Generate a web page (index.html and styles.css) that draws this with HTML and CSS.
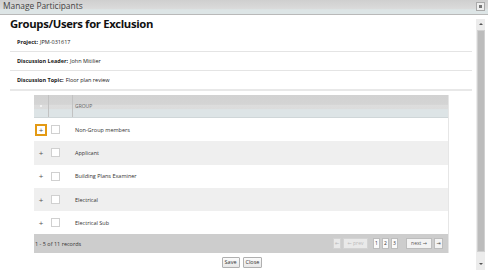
FILE: index.html
```html
<!DOCTYPE html>
<html>
<head>
<meta charset="utf-8">
<link rel="stylesheet" href="styles.css">
</head>
<body>
<div class="window">
  <div class="titlebar">
    <span class="title">Manage Participants</span>
    <span class="close"></span>
  </div>
  <div class="body">
    <div class="main">
      <h1 class="heading">Groups/Users for Exclusion</h1>
      <div class="info">
        <div class="info-row"><b>Project:</b> JPM-031617</div>
        <div class="info-row"><b>Discussion Leader:</b> John Mitilier</div>
        <div class="info-row info-last"><b>Discussion Topic:</b> Floor plan review</div>
      </div>
      <div class="grid">
        <div class="grid-head">
          <div class="hcell c1"><span class="dot"></span></div>
          <div class="hcell c2"></div>
          <div class="hcell c3">GROUP</div>
        </div>
        <div class="row">
          <div class="cell c1"><span class="plus focus">+</span></div>
          <div class="cell c2"><span class="check"></span></div>
          <div class="cell c3">Non-Group members</div>
        </div>
        <div class="row alt">
          <div class="cell c1"><span class="plus">+</span></div>
          <div class="cell c2"><span class="check"></span></div>
          <div class="cell c3">Applicant</div>
        </div>
        <div class="row">
          <div class="cell c1"><span class="plus">+</span></div>
          <div class="cell c2"><span class="check"></span></div>
          <div class="cell c3">Building Plans Examiner</div>
        </div>
        <div class="row alt">
          <div class="cell c1"><span class="plus">+</span></div>
          <div class="cell c2"><span class="check"></span></div>
          <div class="cell c3">Electrical</div>
        </div>
        <div class="row">
          <div class="cell c1"><span class="plus">+</span></div>
          <div class="cell c2"><span class="check"></span></div>
          <div class="cell c3">Electrical Sub</div>
        </div>
        <div class="pager">
          <span class="records">1 - 5 of 11 records</span>
          <div class="pages">
            <span class="pbtn dis pg-first">&#8676;</span>
            <span class="pbtn dis pg-prev">&#8592; prev</span>
            <span class="pbtn pg-num pg-n1">1</span>
            <span class="pbtn pg-num">2</span>
            <span class="pbtn pg-num">3</span>
            <span class="pbtn pg-next">next &#8594;</span>
            <span class="pbtn pg-last">&#8677;</span>
          </div>
        </div>
      </div>
      <div class="actions">
        <button class="btn">Save</button>
        <button class="btn">Close</button>
      </div>
    </div>
    <div class="scrollbar">
      <div class="arrow up"></div>
      <div class="thumb"></div>
      <div class="arrow down"></div>
    </div>
  </div>
</div>
</body>
</html>
```
FILE: styles.css
```css
html, body {
  margin: 0;
  padding: 0;
  background: #fff;
}
body {
  font-family: "Open Sans", "DejaVu Sans", sans-serif;
  color: #333;
  width: 488px;
  height: 270px;
  overflow: hidden;
}
.window {
  display: flex;
  flex-direction: column;
  height: 270px;
}
.titlebar {
  height: 14px;
  background: linear-gradient(#cfcfcf 0%, #dadada 60%, #dde5e6 70%, #dde5e6 100%);
  border-bottom: 1px solid #b9b9b9;
  display: flex;
  align-items: flex-start;
  justify-content: space-between;
  flex-shrink: 0;
}
.title {
  font-size: 8.4px;
  line-height: 12px;
  color: #444;
  padding-left: 3px;
}
.close {
  width: 7px;
  height: 7px;
  margin: 2px 3px 0 0;
  border: 1px solid #aaa;
  background: #eee;
  position: relative;
}
.close::after {
  content: "";
  position: absolute;
  left: 2px;
  top: 2px;
  width: 3px;
  height: 3px;
  background: #777;
}
.body {
  flex: 1;
  display: flex;
}
.main {
  flex: 1;
  padding: 0 4px 0 10px;
}
.heading {
  margin: 0;
  font-size: 11.3px;
  letter-spacing: -0.35px;
  line-height: 15px;
  font-weight: 700;
  color: #111;
  padding-top: 1px;
  height: 16px;
}
.info {
  margin-top: 1px;
}
.info-row {
  height: 18px;
  border-bottom: 1px solid #e4e4e4;
  font-size: 5.5px;
  line-height: 17px;
  padding-left: 7px;
  color: #222;
  display: flex;
  align-items: center;
  gap: 2px;
}
.info-row.info-last {
  border-bottom: 2px solid #e8e8e8;
}
.info-row b {
  font-weight: 700;
}
.grid {
  margin: 4px 23px 0 24px;
  border-right: 1px solid #e6e6e6;
}
.grid-head {
  display: flex;
  height: 22px;
  background: linear-gradient(#d2d2d2 0%, #d4d4d4 43%, #dddddd 44%, #dcdcdc 65%, #dde4e6 66%, #dde4e6 100%);
  border-bottom: 1px solid #cfd6d8;
}
.hcell {
  font-size: 5px;
  color: #666;
  display: flex;
  align-items: center;
  border-right: 1px solid #c2c2c2;
}
.hcell.c3 {
  border-right: none;
  padding-left: 2px;
}
.c1 { width: 14px; justify-content: center; flex-shrink: 0; }
.c2 { width: 23px; flex-shrink: 0; }
.c3 { flex: 1; padding-left: 3px; }
.dot {
  width: 2px;
  height: 2px;
  background: #f2f2f2;
}
.row {
  display: flex;
  height: 23.3px;
  background: #fff;
}
.row.alt {
  background: #efefef;
}
.cell {
  display: flex;
  align-items: center;
  font-size: 5.5px;
  color: #333;
}
.cell.c3 {
  padding-left: 4px;
}
.plus {
  font-size: 8px;
  line-height: 8px;
  color: #555;
  width: 9px;
  height: 8px;
  display: flex;
  align-items: center;
  justify-content: center;
}
.plus.focus {
  border: 2px solid #e39a14;
  width: 8px;
  height: 8px;
}
.check {
  width: 7px;
  height: 7px;
  border: 1px solid #d0d0d0;
  background: #fff;
  margin-left: 3px;
}
.pager {
  height: 19px;
  background: #cdcdcd;
  display: flex;
  align-items: center;
  justify-content: space-between;
  padding: 0 5px 0 1px;
}
.records {
  font-size: 5.5px;
  color: #333;
}
.pages {
  display: flex;
  align-items: center;
  gap: 2px;
}
.pbtn {
  border: 1px solid #bdbdbd;
  background: #f3f3f3;
  font-size: 5px;
  line-height: 9px;
  color: #555;
  text-align: center;
  box-sizing: border-box;
  height: 11px;
  white-space: nowrap;
}
.pbtn.dis {
  color: #bbb;
  border-color: #d3d3d3;
  background: #e9e9e9;
}
.pg-first { width: 8px; }
.pg-prev { width: 25px; }
.pg-num {
  width: 7px;
  color: #333;
  background: #fafafa;
}
.pg-n1 { margin-left: 3px; }
.pg-next { width: 26px; margin-left: 6px; }
.pg-last { width: 9px; }
.actions {
  display: flex;
  justify-content: center;
  gap: 3px;
  margin-top: 4px;
  padding-left: 2px;
}
.btn {
  font-family: "Open Sans", "DejaVu Sans", sans-serif;
  font-size: 5.5px;
  height: 11px;
  line-height: 9px;
  padding: 0 2px;
  border: 1px solid #b0b0b0;
  background: linear-gradient(#fbfbfb, #e8e8e8);
  color: #333;
  border-radius: 1px;
}
.scrollbar {
  width: 9px;
  margin: 4px 3px 0 0;
  background: #ececec;
  display: flex;
  flex-direction: column;
  align-items: center;
}
.arrow {
  width: 0;
  height: 0;
  border-left: 2px solid transparent;
  border-right: 2px solid transparent;
  margin: 4px 0 5px;
}
.arrow.up {
  border-bottom: 2px solid #555;
}
.arrow.down {
  border-top: 2px solid #555;
  margin-top: 11px;
}
.thumb {
  width: 6px;
  flex: 1;
  background: #bcbcbc;
  border: 1px solid #d0d0d0;
}
```
